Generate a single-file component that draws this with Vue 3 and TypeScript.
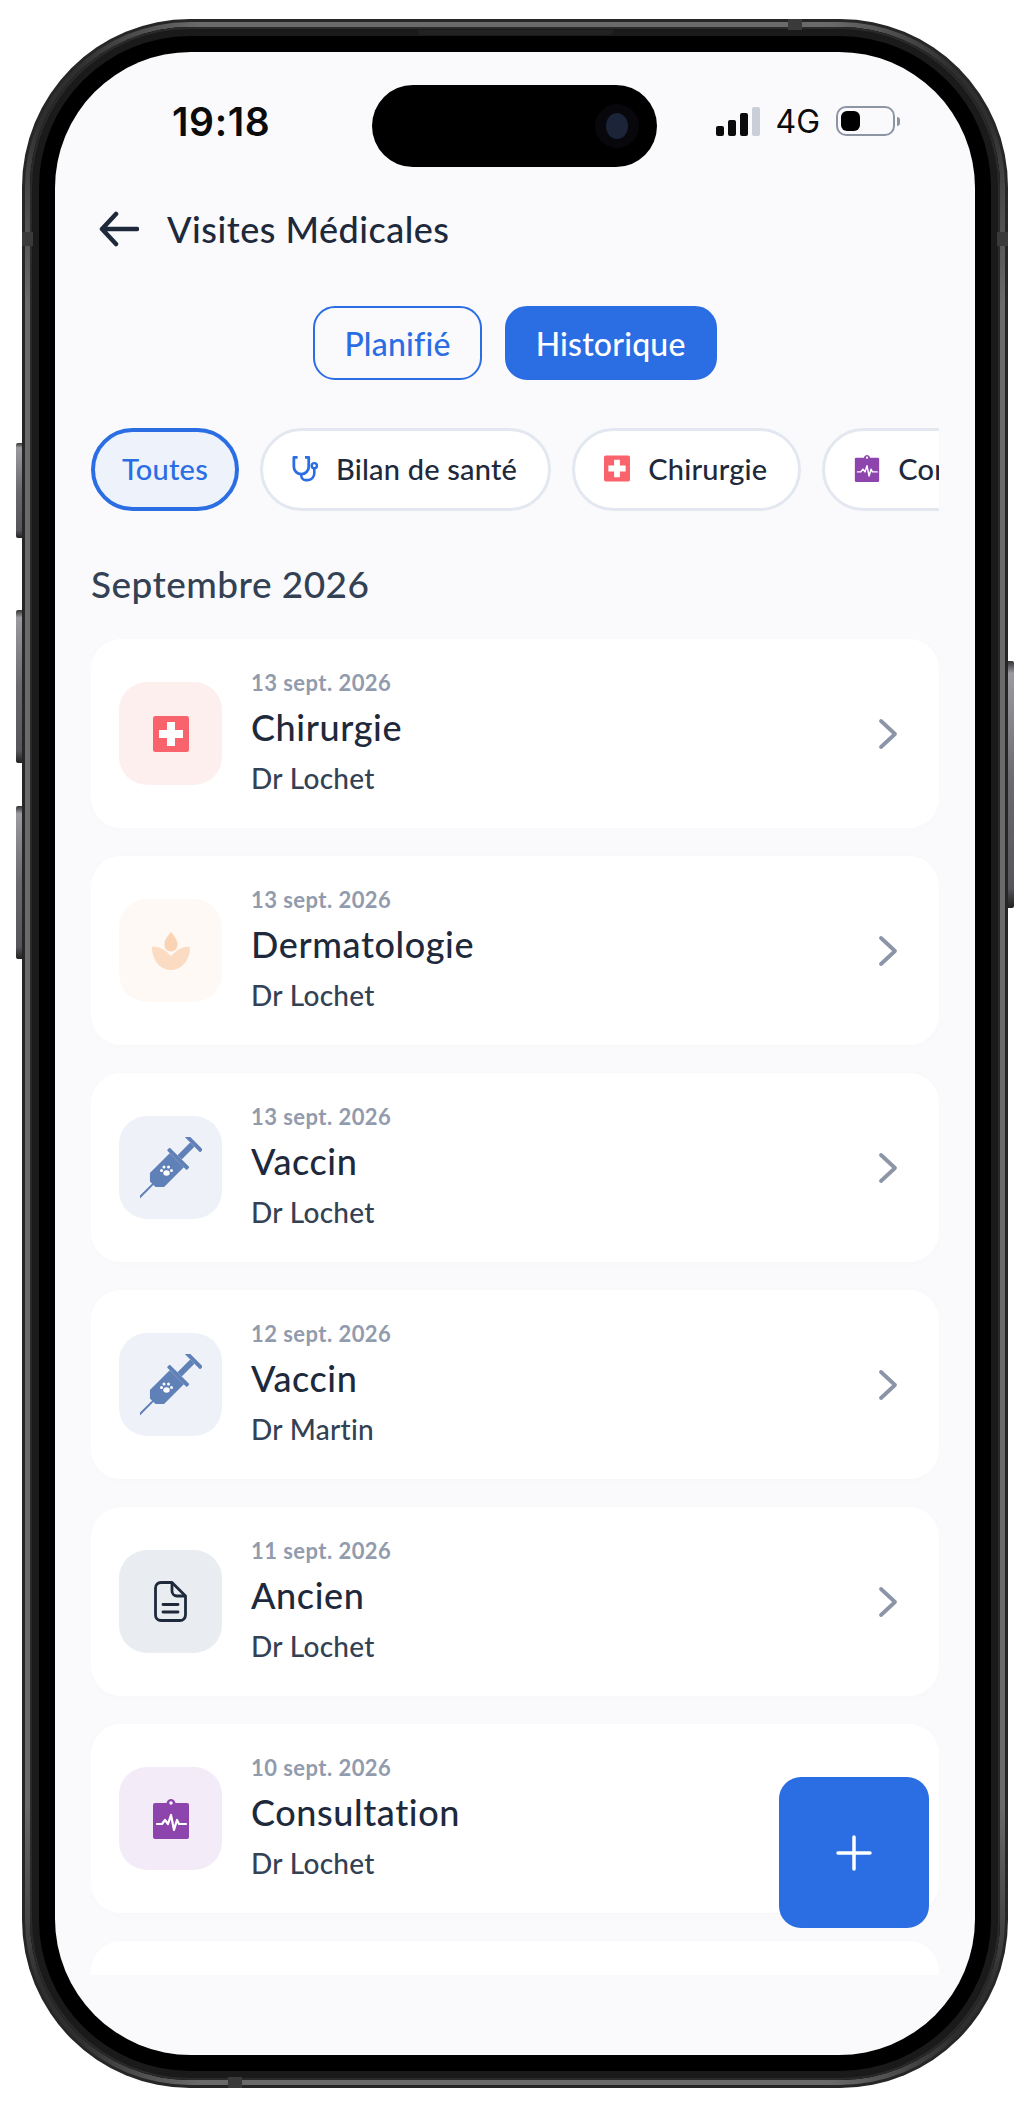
<script setup lang="ts">
type IconName = 'surgery' | 'skin' | 'vaccine' | 'doc' | 'consult'

const chips: { label: string, icon?: string, active?: boolean }[] = [
  { label: 'Toutes', active: true },
  { label: 'Bilan de santé', icon: 'steth' },
  { label: 'Chirurgie', icon: 'surgery' },
  { label: 'Consultation', icon: 'consult' },
]

const visits: { date: string, title: string, doctor: string, icon: IconName }[] = [
  { date: '13 sept. 2026', title: 'Chirurgie', doctor: 'Dr Lochet', icon: 'surgery' },
  { date: '13 sept. 2026', title: 'Dermatologie', doctor: 'Dr Lochet', icon: 'skin' },
  { date: '13 sept. 2026', title: 'Vaccin', doctor: 'Dr Lochet', icon: 'vaccine' },
  { date: '12 sept. 2026', title: 'Vaccin', doctor: 'Dr Martin', icon: 'vaccine' },
  { date: '11 sept. 2026', title: 'Ancien', doctor: 'Dr Lochet', icon: 'doc' },
  { date: '10 sept. 2026', title: 'Consultation', doctor: 'Dr Lochet', icon: 'consult' },
]
</script>

<template>
  <div class="phone">
    <!-- boutons du boitier -->
    <span class="side-btn left b1"></span>
    <span class="side-btn left b2"></span>
    <span class="side-btn left b3"></span>
    <span class="side-btn right b4"></span>

    <span class="band top"></span>
    <span class="band mid-l"></span>
    <span class="band mid-r"></span>
    <span class="band bottom"></span>

    <svg width="0" height="0" class="defs">
      <symbol id="ic-surgery" viewBox="0 0 36 36">
        <rect width="36" height="36" rx="2.5" fill="#f9636b" />
        <path d="M14 6h8v8h8v8h-8v8h-8v-8H6v-8h8z" fill="#fff" />
      </symbol>
      <symbol id="ic-skin" viewBox="0 0 38 38">
        <path d="M19 0c4 5 6.500 8 6.500 12.500 0 4-2.500 7-6.500 7s-6.500-3-6.500-7C12.500 8 15 5 19 0z" fill="#f9d3b3" />
        <path d="M0 15c8-1 14 4 19 9 5-5 11-10 19-9 0 13-8 23-19 23S0 28 0 15z" fill="#fbdcc3" />
      </symbol>
      <symbol id="ic-vaccine" viewBox="0 0 62 62">
        <g transform="translate(-2 0) rotate(-45 31 31)" fill="#6080b8">
          <rect x="-11" y="30" width="21" height="2" />
          <path d="M8 27l6-6h28v20H14l-6-6z" />
          <rect x="42" y="17" width="4" height="28" rx="1" />
          <rect x="46" y="28" width="18" height="6" />
          <rect x="64" y="20" width="4" height="22" rx="1" />
        </g>
        <g fill="#fff">
          <ellipse cx="26.500" cy="36" rx="3.200" ry="2.800" />
          <circle cx="21.500" cy="33.500" r="1.500" />
          <circle cx="24" cy="30" r="1.500" />
          <circle cx="28.500" cy="30" r="1.500" />
          <circle cx="31.500" cy="33.500" r="1.500" />
        </g>
      </symbol>
      <symbol id="ic-doc" viewBox="0 0 33 41">
        <path d="M7 1.500h11L31.500 15v19a5.500 5.500 0 0 1-5.500 5.500H7A5.500 5.500 0 0 1 1.500 34V7A5.500 5.500 0 0 1 7 1.500z" fill="none" stroke="#1e293b" stroke-width="2.800" stroke-linejoin="round" />
        <path d="M18 1.500V10a5 5 0 0 0 5 5h8.500" fill="none" stroke="#1e293b" stroke-width="2.800" />
        <path d="M9 23.500h15M9 31h15" stroke="#1e293b" stroke-width="2.800" stroke-linecap="round" />
      </symbol>
      <symbol id="ic-consult" viewBox="0 0 36 40">
        <path d="M2 4h11.500C14 1.500 16 0 18 0s4 1.500 4.500 4H34a2 2 0 0 1 2 2v32a2 2 0 0 1-2 2H2a2 2 0 0 1-2-2V6a2 2 0 0 1 2-2z" fill="#8e44ad" />
        <circle cx="18" cy="4" r="1.700" fill="#fff" />
        <path d="M4 25h5l3-4 3 4 3-9 3 15 3-10 2 4h7" fill="none" stroke="#fff" stroke-width="2.200" stroke-linejoin="round" stroke-linecap="round" />
      </symbol>
      <symbol id="ic-steth" viewBox="0 0 28 28">
        <path d="M6 2H2v10a8 8 0 0 0 16 0V2h-4" fill="none" stroke="#2b6de3" stroke-width="3" stroke-linejoin="round" />
        <path d="M10 20v1.500a5 5 0 0 0 5 5h2a7 7 0 0 0 7-7V14" fill="none" stroke="#2b6de3" stroke-width="2.800" />
        <circle cx="24" cy="11" r="2.800" fill="none" stroke="#2b6de3" stroke-width="2.600" />
      </symbol>
    </svg>

    <div class="rim">
      <div class="bezel">
        <span class="speaker"></span>
        <div class="screen">
          <div class="island">
            <span class="camera"><span class="lens"></span></span>
          </div>

          <div class="status">
            <span class="time">19:18</span>
            <div class="status-right">
              <div class="signal">
                <i class="s1"></i><i class="s2"></i><i class="s3"></i><i class="s4"></i>
              </div>
              <span class="net">4G</span>
              <div class="battery"><i></i></div>
              <span class="nub"></span>
            </div>
          </div>

          <header class="head">
            <svg class="back" viewBox="0 0 40 36" width="40" height="36" fill="none" stroke="#1e293b" stroke-width="4.500" stroke-linecap="round" stroke-linejoin="round">
              <path d="M38 18H3M17 3 3 18l14 15" />
            </svg>
            <h1>Visites Médicales</h1>
          </header>

          <div class="tabs">
            <button class="tab">Planifié</button>
            <button class="tab on">Historique</button>
          </div>

          <div class="chips">
            <div v-for="chip in chips" :key="chip.label" :class="['chip', { active: chip.active }]">
              <svg v-if="chip.icon" class="chip-icon"><use :href="'#ic-' + chip.icon" /></svg>
              <span>{{ chip.label }}</span>
            </div>
          </div>

          <h2 class="month">Septembre 2026</h2>

          <div class="list">
            <div v-for="v in visits" :key="v.date + v.title" class="card">
              <div :class="['box', v.icon]">
                <svg><use :href="'#ic-' + v.icon" /></svg>
              </div>
              <div class="info">
                <div class="date">{{ v.date }}</div>
                <div class="title">{{ v.title }}</div>
                <div class="doctor">{{ v.doctor }}</div>
              </div>
              <svg class="chevron" viewBox="0 0 20 32" width="20" height="32" fill="none" stroke="#8b95a7" stroke-width="3.800" stroke-linecap="round" stroke-linejoin="round">
                <path d="M3 3l14 13L3 29" />
              </svg>
            </div>
            <div class="card"></div>
          </div>

          <button class="fab">
            <svg viewBox="0 0 36 36" width="36" height="36" stroke="#fff" stroke-width="3.500" stroke-linecap="round">
              <path d="M18 2v32M2 18h32" />
            </svg>
          </button>
        </div>
      </div>
    </div>
  </div>
</template>

<style scoped>
.phone {
  position: relative;
  box-sizing: border-box;
  width: 986px;
  height: 2069px;
  margin: 19px 0 0 22px;
  padding: 3px;
  border-radius: 168px;
  background: #262626;
  font-family: "Lato", "Noto Sans", sans-serif;
}

.defs {
  position: absolute;
}

.side-btn {
  position: absolute;
  width: 6px;
  background: linear-gradient(180deg, #333 0, #9a9aa0 5%, #6a6a6e 50%, #55555a 92%, #222 100%);
}

.side-btn.left {
  left: -6px;
  border-radius: 2px 0 0 2px;
}

.side-btn.right {
  right: -6px;
  border-radius: 0 2px 2px 0;
}

.b1 { top: 424px; height: 95px; }
.b2 { top: 591px; height: 153px; }
.b3 { top: 787px; height: 153px; }
.b4 { top: 642px; height: 247px; }

.band {
  position: absolute;
  z-index: 2;
  background: #3a3a3a;
}

.band.top { top: 0; left: 766px; width: 14px; height: 11px; }
.band.bottom { bottom: 0; left: 206px; width: 14px; height: 11px; }
.band.mid-l { top: 213px; left: 0; width: 11px; height: 14px; }
.band.mid-r { top: 213px; right: 0; width: 11px; height: 14px; }

/* liseré gris sur les bords droits, sombre dans les coins */
.rim {
  box-sizing: border-box;
  height: 100%;
  padding: 5px;
  border-radius: 165px;
  background: conic-gradient(#6a6a6a 0 17deg, #2e2e2e 24deg 27deg, #6a6a6a 33deg 147deg, #2e2e2e 153deg 156deg, #6a6a6a 163deg 197deg, #2e2e2e 204deg 207deg, #6a6a6a 213deg 327deg, #2e2e2e 333deg 336deg, #6a6a6a 343deg);
}

.bezel {
  position: relative;
  box-sizing: border-box;
  height: 100%;
  padding: 25px;
  border-radius: 160px;
  background: #000;
  box-shadow: inset 0 0 0 2px #2a2a2a, inset 0 0 0 9px #1a1a1a;
}

.speaker {
  position: absolute;
  top: 3px;
  left: 388px;
  width: 195px;
  height: 5px;
  border-radius: 0 0 4px 4px;
  background: #222;
}

.screen {
  position: relative;
  display: flex;
  flex-direction: column;
  box-sizing: border-box;
  height: 100%;
  padding: 52px 36px 0;
  overflow: hidden;
  border-radius: 136px;
  background: #fafafc;
}

.island {
  position: absolute;
  top: 33px;
  left: 317px;
  display: flex;
  align-items: center;
  justify-content: flex-end;
  box-sizing: border-box;
  width: 285px;
  height: 82px;
  padding-right: 18px;
  border-radius: 41px;
  background: #000;
}

.camera {
  display: flex;
  align-items: center;
  justify-content: center;
  width: 44px;
  height: 44px;
  border-radius: 50%;
  background: #07070c;
}

.lens {
  width: 22px;
  height: 26px;
  border-radius: 50%;
  background: #1c2439;
}

.status {
  display: flex;
  align-items: center;
  justify-content: space-between;
  height: 34px;
  padding: 0 39px 0 81px;
  color: #0b0b0b;
  font-family: "Inter", sans-serif;
}

.time {
  font-size: 39px;
  font-weight: 600;
  letter-spacing: 0.6px;
}

.status-right {
  display: flex;
  align-items: center;
}

.signal {
  display: flex;
  align-items: flex-end;
  gap: 4px;
  height: 29px;
}

.signal i {
  width: 8px;
  border-radius: 2px;
  background: #0b0b0b;
}

.s1 { height: 10px; }
.s2 { height: 16px; }
.s3 { height: 23px; }
.signal .s4 { height: 29px; background: #c9ced8; }

.net {
  margin-left: 15px;
  font-size: 32px;
  font-weight: 400;
}

.battery {
  box-sizing: border-box;
  width: 59px;
  height: 30px;
  margin-left: 16px;
  padding: 3px;
  border: 2px solid #8d94a3;
  border-radius: 10px;
}

.battery i {
  display: block;
  width: 19px;
  height: 100%;
  border-radius: 6px;
  background: #000;
}

.nub {
  width: 3px;
  height: 9px;
  margin-left: 2px;
  border-radius: 0 3px 3px 0;
  background: #8d94a3;
}

.head {
  display: flex;
  align-items: center;
  gap: 28px;
  height: 40px;
  margin-top: 71px;
  padding-left: 8px;
}

.head h1 {
  margin: 0;
  color: #1e293b;
  font-size: 36px;
  font-weight: 500;
  letter-spacing: 0.5px;
}

.tabs {
  display: flex;
  justify-content: center;
  gap: 23px;
  margin-top: 57px;
}

.tab {
  box-sizing: border-box;
  height: 74px;
  padding: 0 29px;
  border: 2px solid #2b6de3;
  border-radius: 22px;
  background: transparent;
  color: #2b6de3;
  font: 500 32px "Lato", "Noto Sans", sans-serif;
  letter-spacing: 0.2px;
}

.tab.on {
  background: #2b6de3;
  color: #fff;
}

.chips {
  display: flex;
  gap: 21px;
  margin-top: 48px;
  overflow: hidden;
}

.chip {
  display: flex;
  flex-shrink: 0;
  align-items: center;
  gap: 18px;
  box-sizing: border-box;
  height: 83px;
  padding: 0 31px 2px 29px;
  border: 3px solid #e3e8f0;
  border-radius: 42px;
  background: #fff;
  color: #1e293b;
  font-size: 29px;
  font-weight: 500;
  letter-spacing: 0.2px;
}

.chip.active {
  padding: 0 27px 2px;
  border-width: 4px;
  border-color: #2b6de3;
  background: #eef3fb;
  color: #2b6de3;
}

.chip-icon {
  width: 26px;
  height: 27px;
}

.month {
  margin: 49px 0 0;
  color: #334155;
  font-size: 37px;
  font-weight: 500;
  line-height: 48px;
  letter-spacing: 0.45px;
}

.list {
  display: flex;
  flex-direction: column;
  gap: 28px;
  height: 1336px;
  margin-top: 31px;
  overflow: hidden;
}

.card {
  display: flex;
  flex-shrink: 0;
  align-items: center;
  gap: 29px;
  box-sizing: border-box;
  height: 189px;
  padding: 0 41px 0 28px;
  border-radius: 30px;
  background: #fff;
  box-shadow: 0 1px 10px rgba(30, 41, 59, 0.015);
}

.box {
  display: flex;
  flex-shrink: 0;
  align-items: center;
  justify-content: center;
  width: 103px;
  height: 103px;
  border-radius: 28px;
}

.box.surgery { background: #feefef; }
.box.skin { background: #fff9f5; }
.box.vaccine { background: #eef2f8; }
.box.doc { background: #e9ecf1; }
.box.consult { background: #f3ebf7; }

.box svg { width: 36px; height: 36px; }
.box.skin svg { width: 38px; height: 38px; }
.box.vaccine svg { width: 62px; height: 62px; }
.box.doc svg { width: 33px; height: 41px; }
.box.consult svg { width: 36px; height: 40px; }

.info {
  flex: 1;
  margin-top: -4px;
}

.date {
  color: #929bad;
  font-size: 22px;
  font-weight: 700;
  line-height: 30px;
  letter-spacing: 0.45px;
}

.title {
  margin-top: 6px;
  color: #1e293b;
  font-size: 36px;
  font-weight: 500;
  line-height: 46px;
  letter-spacing: 0.6px;
}

.doctor {
  margin-top: 10px;
  color: #334155;
  font-size: 28px;
  font-weight: 500;
  line-height: 36px;
  letter-spacing: 0.3px;
}

.fab {
  position: absolute;
  top: 1725px;
  left: 724px;
  display: flex;
  align-items: center;
  justify-content: center;
  width: 150px;
  height: 151px;
  padding: 0;
  border: 0;
  border-radius: 22px;
  background: #2b6de3;
}
</style>

<style>
html, body {
  background: #fff;
}
</style>
